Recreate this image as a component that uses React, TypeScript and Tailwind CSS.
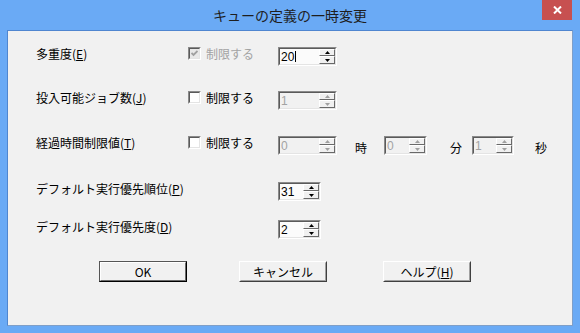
import React from 'react';

const jp = "font-['Noto_Sans_CJK_JP','Noto_Sans',sans-serif]";

interface SpinProps {
  value: string;
  width: string;
  disabled?: boolean;
  caret?: boolean;
}

const Arrow = ({ up, disabled }: { up?: boolean; disabled?: boolean }) => (
  <svg width="5" height="3" viewBox="0 0 5 3" className="block">
    <path d={up ? 'M2.5 0 L5 3 L0 3 Z' : 'M0 0 L5 0 L2.5 3 Z'} fill={disabled ? '#a0a0a0' : '#000'} />
  </svg>
);

const SpinButton = ({ up, disabled, tall }: { up?: boolean; disabled?: boolean; tall?: boolean }) => (
  <div
    className={`flex items-center justify-center ${tall ? 'h-[8px]' : 'h-[7px]'} border border-t-white border-l-white border-b-[#696969] border-r-[#696969] bg-[#f0f0f0]`}
  >
    <Arrow up={up} disabled={disabled} />
  </div>
);

const Spin = ({ value, width, disabled, caret }: SpinProps) => (
  <div className={`flex h-[19px] ${width} shrink-0 border border-t-[#8a8a8a] border-l-[#8a8a8a] border-b-white border-r-white`}>
    <div
      className={`flex flex-1 border border-t-[#5a5a5a] border-l-[#5a5a5a] border-b-[#e4e4e4] border-r-[#e4e4e4] ${
        disabled ? 'bg-[#f1f1f1]' : 'bg-[#fbfbfb]'
      }`}
    >
      <div
        className={`flex flex-1 items-center pl-[1px] text-[12px] leading-none font-['Liberation_Sans',sans-serif] ${
          disabled ? 'text-[#a3a3a3]' : 'text-black'
        }`}
      >
        {value}
        {caret && <span className="ml-[1px] inline-block h-[11px] w-px bg-black" />}
      </div>
      <div className="flex w-[16px] flex-col">
        <SpinButton up disabled={disabled} />
        <SpinButton disabled={disabled} tall />
      </div>
    </div>
  </div>
);

const Check = ({ checked, disabled }: { checked?: boolean; disabled?: boolean }) => (
  <div className="mr-[5px] h-[13px] w-[13px] shrink-0 border border-t-[#8a8a8a] border-l-[#8a8a8a] border-b-white border-r-white">
    <div
      className={`flex h-full w-full items-center justify-center border border-t-[#5a5a5a] border-l-[#5a5a5a] border-b-[#e4e4e4] border-r-[#e4e4e4] ${
        disabled ? 'bg-[#e8e8e8]' : 'bg-white'
      }`}
    >
      {checked && (
        <svg width="7" height="7" viewBox="0 0 7 7">
          <path d="M0.5 3 L2.5 5 L6.5 1" stroke={disabled ? '#a0a0a0' : '#000'} strokeWidth="1.8" fill="none" />
        </svg>
      )}
    </div>
  </div>
);

const Limit = ({ checked, disabled }: { checked?: boolean; disabled?: boolean }) => (
  <div className="flex w-[90px] shrink-0 items-start">
    <Check checked={checked} disabled={disabled} />
    <span className={`text-[12px] leading-[13px] ${disabled ? 'text-[#a3a3a3]' : 'text-black'}`}>制限する</span>
  </div>
);

const Label = ({ text, keyChar, width = 'w-[152px]' }: { text: string; keyChar: string; width?: string }) => (
  <div className={`${width} shrink-0 text-[12px] leading-[13px] text-black`}>
    {text}(<u className="underline-offset-[1px]">{keyChar}</u>)
  </div>
);

const Unit = ({ children }: { children: React.ReactNode }) => (
  <span className="mt-[5px] block text-[12px] leading-[13px] text-black">{children}</span>
);

const DialogButton = ({ children, primary }: { children: React.ReactNode; primary?: boolean }) =>
  primary ? (
    <div className="flex h-[21px] w-[88px] border border-t-[#555] border-l-[#555] border-b-black border-r-black">
      <div className="flex flex-1 items-center justify-center border border-t-white border-l-white border-b-[#6a6a6a] border-r-[#6a6a6a] text-[12px] leading-none text-black">
        {children}
      </div>
    </div>
  ) : (
    <div className="flex h-[21px] w-[88px] border border-t-white border-l-white border-b-[#404040] border-r-[#404040]">
      <div className="flex flex-1 items-center justify-center border border-t-transparent border-l-transparent border-b-[#a0a0a0] border-r-[#a0a0a0] text-[12px] leading-none text-black">
        {children}
      </div>
    </div>
  );

export default function App() {
  return (
    <div className={`flex h-[333px] w-[580px] flex-col bg-[#6aaaf5] px-[7px] pb-[7px] ${jp}`}>
      <div className="relative flex h-[30px] shrink-0 items-center justify-center">
        <span className="text-[14px] leading-none text-[#1e1e1e]">キューの定義の一時変更</span>
        <div className="absolute right-[1px] top-0 flex h-[20px] w-[30px] items-center justify-center bg-[#c75050]">
          <svg width="9" height="8" viewBox="0 0 9 8">
            <path d="M1 0.5 L8 7.5 M8 0.5 L1 7.5" stroke="#fff" strokeWidth="2" />
          </svg>
        </div>
      </div>

      <div className="flex flex-1 flex-col border border-t-[#4f86d0] border-l-[#4f86d0] border-b-[#7f9fc8] border-r-[#7f9fc8] bg-[#f1f1f1] pl-[28px] pt-[16px]">
        <div className="flex h-[19px] items-start">
          <Label text="多重度" keyChar="E" />
          <Limit checked disabled />
          <Spin value="20" width="w-[59px]" caret />
        </div>

        <div className="mt-[25px] flex h-[19px] items-start">
          <Label text="投入可能ジョブ数" keyChar="J" />
          <Limit />
          <Spin value="1" width="w-[59px]" disabled />
        </div>

        <div className="mt-[26px] flex h-[19px] items-start">
          <Label text="経過時間制限値" keyChar="T" />
          <Limit />
          <Spin value="0" width="w-[59px]" disabled />
          <div className="ml-[18px] mr-[17px]">
            <Unit>時</Unit>
          </div>
          <Spin value="0" width="w-[43px]" disabled />
          <div className="ml-[23px] mr-[10px]">
            <Unit>分</Unit>
          </div>
          <Spin value="1" width="w-[42px]" disabled />
          <div className="ml-[21px]">
            <Unit>秒</Unit>
          </div>
        </div>

        <div className="mt-[27px] flex h-[19px] items-start">
          <Label text="デフォルト実行優先順位" keyChar="P" width="w-[242px]" />
          <Spin value="31" width="w-[43px]" />
        </div>

        <div className="mt-[19px] flex h-[19px] items-start">
          <Label text="デフォルト実行優先度" keyChar="D" width="w-[242px]" />
          <Spin value="2" width="w-[43px]" />
        </div>

        <div className="mt-[22px] flex items-start gap-[52px] pl-[63px]">
          <DialogButton primary>OK</DialogButton>
          <DialogButton>キャンセル</DialogButton>
          <div className="ml-[4px]">
            <DialogButton>
              ヘルプ(<u className="underline-offset-[1px]">H</u>)
            </DialogButton>
          </div>
        </div>
      </div>
    </div>
  );
}
